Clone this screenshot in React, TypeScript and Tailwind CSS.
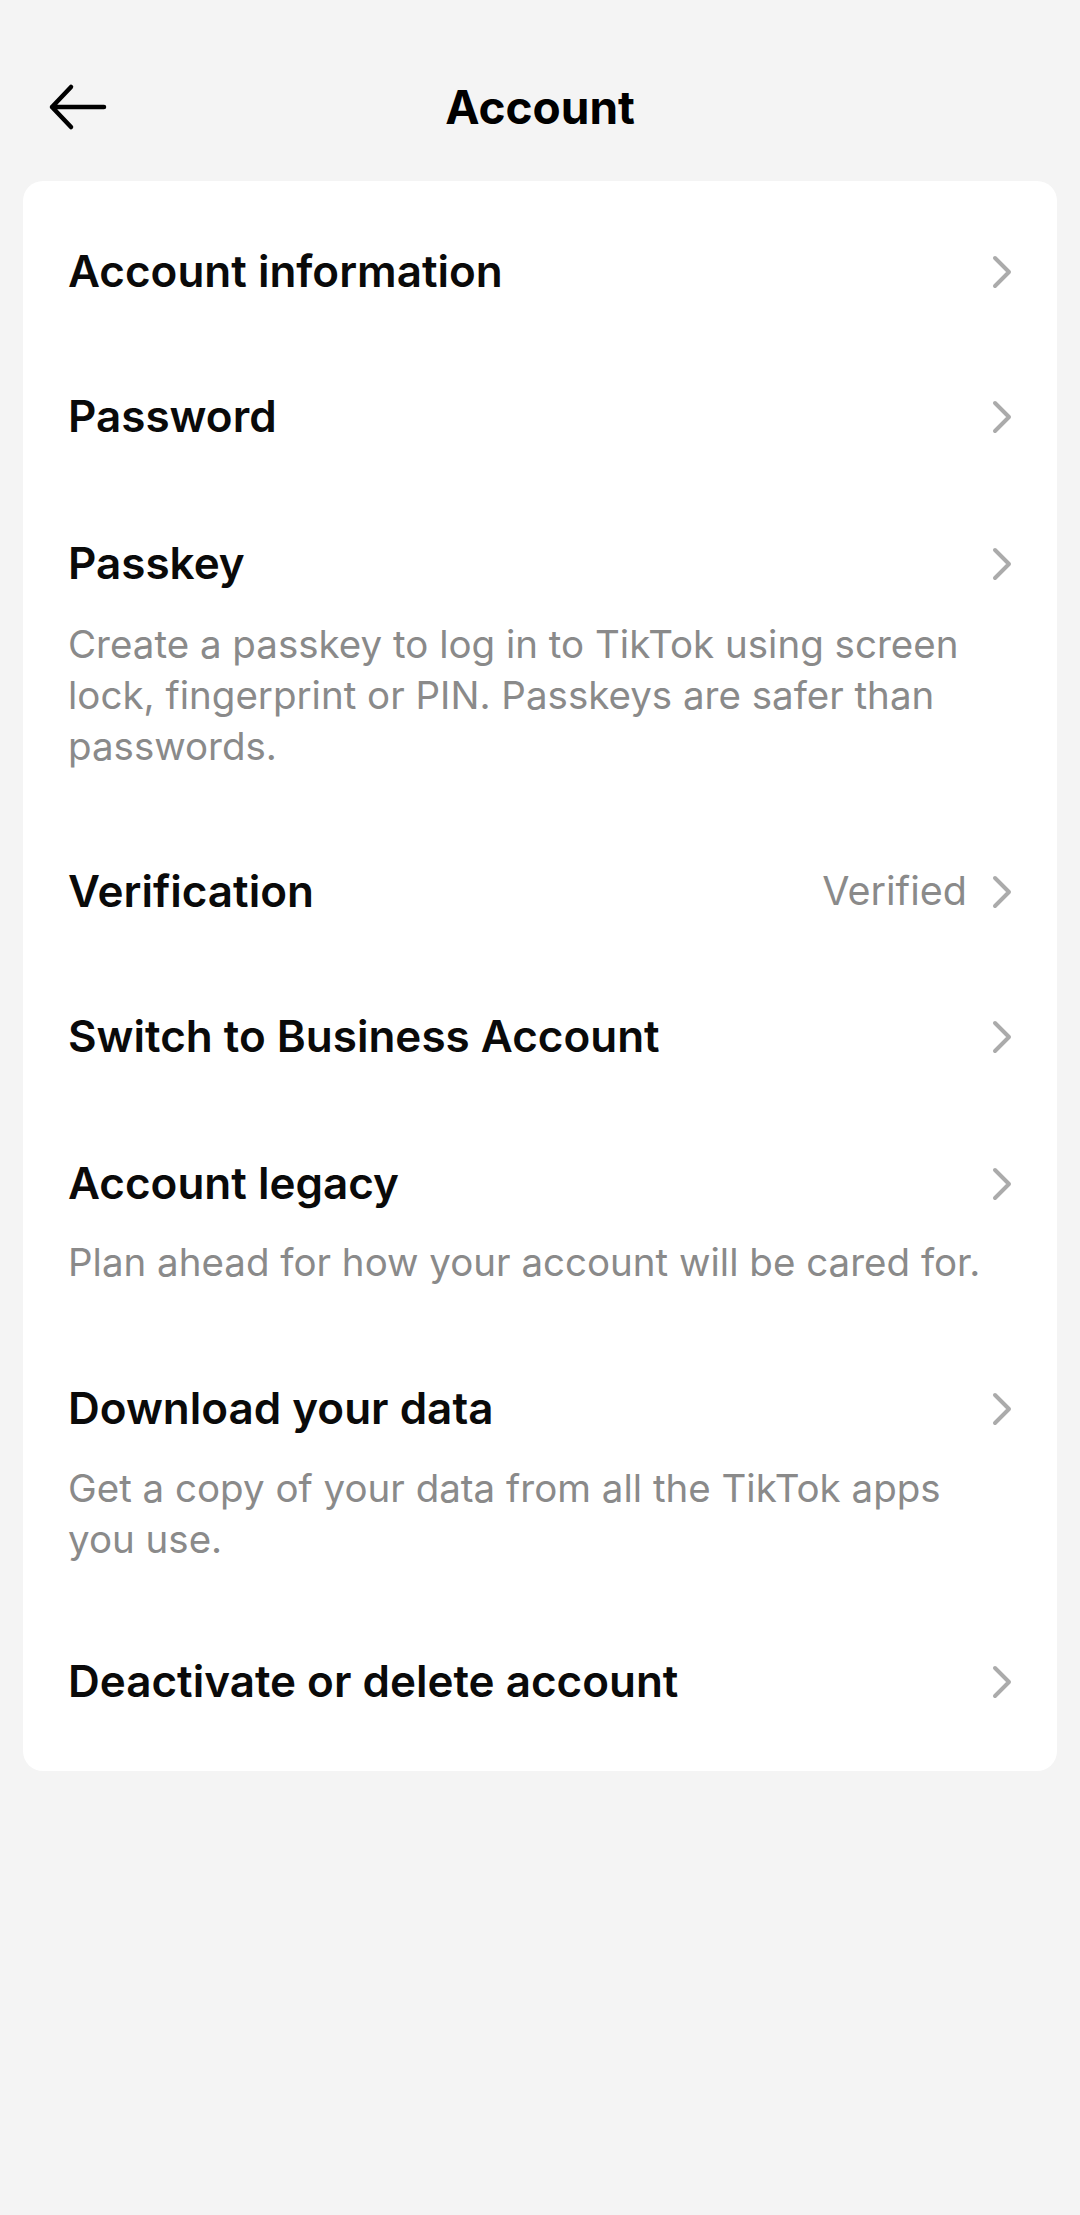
import React from "react";

type Item = {
  title: string;
  desc?: string;
  value?: string;
  descGap?: string;
  bottom?: string;
};

const items: Item[] = [
  { title: "Account information" },
  { title: "Password" },
  {
    title: "Passkey",
    desc: "Create a passkey to log in to TikTok using screen lock, fingerprint or PIN. Passkeys are safer than passwords.",
  },
  { title: "Verification", value: "Verified" },
  { title: "Switch to Business Account" },
  {
    title: "Account legacy",
    desc: "Plan ahead for how your account will be cared for.",
    descGap: "mt-[25px]",
    bottom: "pb-[45px]",
  },
  {
    title: "Download your data",
    desc: "Get a copy of your data from all the TikTok apps you use.",
    descGap: "mt-[26px]",
    bottom: "pb-[43px]",
  },
  { title: "Deactivate or delete account" },
];

const Chevron = () => (
  <svg width="22" height="36" viewBox="0 0 22 36" fill="none" className="shrink-0">
    <path
      d="M4 4 L18 18 L4 32"
      stroke="#ABABAB"
      strokeWidth="4"
      strokeLinecap="round"
      strokeLinejoin="round"
    />
  </svg>
);

const BackArrow = () => (
  <svg width="60" height="50" viewBox="0 0 60 50" fill="none">
    <path
      d="M56 25 H4 M23 5 L4 25 L23 45"
      stroke="#000000"
      strokeWidth="4.5"
      strokeLinecap="round"
      strokeLinejoin="round"
    />
  </svg>
);

const Row = ({ item }: { item: Item }) => {
  const hasDesc = !!item.desc;
  return (
    <div
      className={
        hasDesc
          ? `pl-[45px] pr-[44px] pt-[47px] ${item.bottom ?? "pb-[46px]"}`
          : "pl-[45px] pr-[44px] pt-[45px] pb-[43px]"
      }
    >
      <div className="flex items-center">
        <span className="flex-1 text-[44px] leading-[57px] font-semibold text-[#0a0a0a]">
          {item.title}
        </span>
        {item.value && (
          <span className="mr-[24px] text-[39.5px] leading-[57px] text-[#8A8A8A]">
            {item.value}
          </span>
        )}
        <Chevron />
      </div>
      {hasDesc && (
        <p
          className={`${item.descGap ?? "mt-[27px]"} max-w-[930px] text-[38.5px] leading-[51px] text-[#8A8A8A]`}
        >
          {item.desc}
        </p>
      )}
    </div>
  );
};

export default function App() {
  return (
    <div className="min-h-screen bg-[#F4F4F4] font-[Inter,sans-serif] pb-10">
      <div className="pt-[60px] h-[154px] grid grid-cols-[1fr_auto_1fr] items-center">
        <div className="pl-[48px] flex items-center">
          <BackArrow />
        </div>
        <h1 className="text-[46px] font-bold text-black leading-none">Account</h1>
        <div />
      </div>
      <div className="mx-[23px] mt-[27px] bg-white rounded-[20px] pt-[17px] pb-[18px]">
        {items.map((item) => (
          <Row key={item.title} item={item} />
        ))}
      </div>
    </div>
  );
}
